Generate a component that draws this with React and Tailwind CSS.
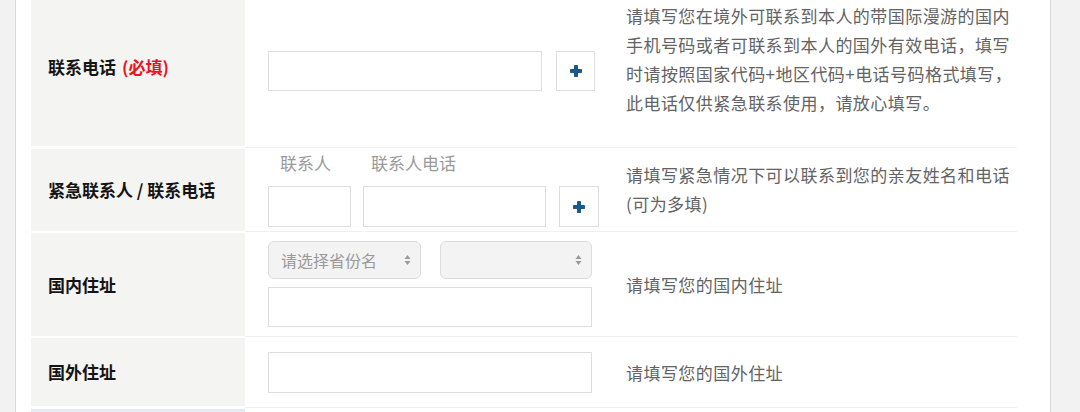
import React from "react";

const font = { fontFamily: '"Noto Sans CJK SC", "Noto Sans", sans-serif' };

function Plus() {
  return (
    <svg width="12" height="12" viewBox="0 0 12 12">
      <rect x="4" y="0" width="4" height="12" rx="0.7" fill="#1c5a8c" />
      <rect x="0" y="4" width="12" height="4" rx="0.7" fill="#1c5a8c" />
    </svg>
  );
}

function Arrows() {
  return (
    <svg width="7" height="12" viewBox="0 0 7 12">
      <path d="M3.5 1 L6.5 5 L0.5 5 Z" fill="#9a9a9a" />
      <path d="M3.5 11 L6.5 7 L0.5 7 Z" fill="#9a9a9a" />
    </svg>
  );
}

function Sep({ thick }) {
  return (
    <div className={`flex shrink-0 ${thick ? "h-[3px]" : "h-[2px]"}`}>
      <div className="w-[214px] bg-white" />
      <div className="flex-1 bg-white flex flex-col">
        {thick ? <div className="h-px" /> : null}
        <div className="h-px bg-[#efefef]" />
      </div>
    </div>
  );
}

function Label({ children }) {
  return (
    <div className="w-[214px] shrink-0 bg-[#f4f4f2] flex items-center pl-[17px] text-[17px] font-bold text-[#141414]">
      {children}
    </div>
  );
}

const inputCls = "border border-[#dedede] bg-white";
const desc = "text-[17px] leading-[29px] text-[#636363] tracking-[0.45px] whitespace-nowrap";

export default function App() {
  return (
    <div className="w-[1080px] h-[412px] overflow-hidden bg-[#f2f2f2] flex" style={font}>
      <div className="w-[15px] shrink-0" />
      <div className="w-[1036px] shrink-0 bg-white border-x border-[#d9d9d9] pl-[15px] overflow-hidden">
        <div className="w-[986px] flex flex-col -mt-[12px]">
          {/* Row 1 */}
          <div className="flex h-[158px]">
            <Label>
              <span>联系电话</span>
              <span className="text-[#e8141e] ml-[6px]">(必填)</span>
            </Label>
            <div className="w-[381px] shrink-0 pl-[23px] pt-[63px] flex items-start gap-[14px]">
              <div className={`${inputCls} w-[274px] h-[40px]`} />
              <div className={`${inputCls} w-[39px] h-[40px] flex items-center justify-center`}>
                <Plus />
              </div>
            </div>
            <div className="flex-1 pt-[13px]">
              <div className={desc}>请填写您在境外可联系到本人的带国际漫游的国内</div>
              <div className={desc}>手机号码或者可联系到本人的国外有效电话，填写</div>
              <div className={desc}>时请按照国家代码+地区代码+电话号码格式填写，</div>
              <div className={desc}>此电话仅供紧急联系使用，请放心填写。</div>
            </div>
          </div>
          <Sep thick />
          {/* Row 2 */}
          <div className="flex h-[82px]">
            <Label>紧急联系人 / 联系电话</Label>
            <div className="w-[381px] shrink-0 pl-[23px] pt-[2px] flex flex-col">
              <div className="flex h-[27px] text-[17px] text-[#9a9a9a] leading-[24px]">
                <div className="w-[95px] pl-[12px]">联系人</div>
                <div className="pl-[8px]">联系人电话</div>
              </div>
              <div className="flex items-start mt-[8px]">
                <div className={`${inputCls} w-[83px] h-[41px]`} />
                <div className={`${inputCls} w-[183px] h-[41px] ml-[12px]`} />
                <div className={`${inputCls} w-[40px] h-[41px] ml-[13px] flex items-center justify-center`}>
                  <Plus />
                </div>
              </div>
            </div>
            <div className="flex-1 pt-[11px]">
              <div className={desc}>请填写紧急情况下可以联系到您的亲友姓名和电话</div>
              <div className={desc}>(可为多填)</div>
            </div>
          </div>
          <Sep />
          {/* Row 3 */}
          <div className="flex h-[103px]">
            <Label>国内住址</Label>
            <div className="w-[381px] shrink-0 pl-[23px] pt-[8px] flex flex-col">
              <div className="flex">
                <div className="w-[153px] h-[38px] rounded-[6px] border border-[#dcdcdc] bg-[#f3f3f3] flex items-center justify-between pl-[12px] pr-[9px] text-[16px] text-[#999999]">
                  <span>请选择省份名</span>
                  <Arrows />
                </div>
                <div className="w-[152px] h-[38px] ml-[19px] rounded-[6px] border border-[#dcdcdc] bg-[#f3f3f3] flex items-center justify-end pr-[9px]">
                  <Arrows />
                </div>
              </div>
              <div className={`${inputCls} w-[324px] h-[40px] mt-[8px]`} />
            </div>
            <div className="flex-1 flex items-center">
              <div className={desc}>请填写您的国内住址</div>
            </div>
          </div>
          <Sep />
          {/* Row 4 */}
          <div className="flex h-[68px]">
            <Label>国外住址</Label>
            <div className="w-[381px] shrink-0 pl-[23px] flex items-center">
              <div className={`${inputCls} w-[324px] h-[41px]`} />
            </div>
            <div className="flex-1 flex items-center">
              <div className={desc}>请填写您的国外住址</div>
            </div>
          </div>
          <Sep thick />
          {/* Row 5 */}
          <div className="flex h-[40px]">
            <div className="w-[214px] shrink-0 bg-[#e3eaf0]" />
            <div className="flex-1" />
          </div>
        </div>
      </div>
      <div className="flex-1" />
    </div>
  );
}
